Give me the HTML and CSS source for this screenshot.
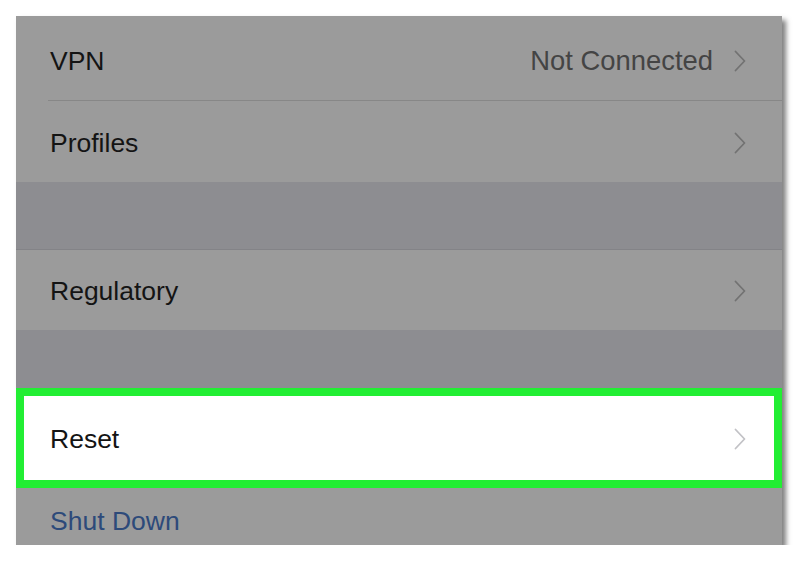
FILE: index.html
```html
<!DOCTYPE html>
<html>
<head>
<meta charset="utf-8">
<link rel="stylesheet" href="styles.css">
</head>
<body>
<div class="panel">
  <div class="row row-vpn">
    <span class="label">VPN</span>
    <span class="right"><span class="value">Not Connected</span>
      <svg class="chev" viewBox="0 0 12 22"><path d="M1.5 1.5 L10.5 11 L1.5 20.5"/></svg></span>
  </div>
  <div class="sep"></div>
  <div class="row row-profiles">
    <span class="label">Profiles</span>
    <svg class="chev" viewBox="0 0 12 22"><path d="M1.5 1.5 L10.5 11 L1.5 20.5"/></svg>
  </div>
  <div class="gap gap-1"></div>
  <div class="row row-reg">
    <span class="label">Regulatory</span>
    <svg class="chev" viewBox="0 0 12 22"><path d="M1.5 1.5 L10.5 11 L1.5 20.5"/></svg>
  </div>
  <div class="gap gap-2"></div>
  <div class="row row-reset">
    <span class="label">Reset</span>
    <svg class="chev chev-light" viewBox="0 0 12 22"><path d="M1.5 1.5 L10.5 11 L1.5 20.5"/></svg>
  </div>
  <div class="row row-shut">
    <span class="label link">Shut Down</span>
  </div>
</div>
</body>
</html>
```
FILE: styles.css
```css
html, body {
  margin: 0;
  padding: 0;
  background: #ffffff;
}
body {
  font-family: "Liberation Sans", Arial, sans-serif;
}
.panel {
  margin: 16px 0 0 16px;
  width: 766px;
  height: 529px;
  background: #9b9b9b;
  box-shadow: 4px 4px 5px rgba(0, 0, 0, 0.5);
  display: flex;
  flex-direction: column;
  overflow: hidden;
}
.row {
  display: flex;
  align-items: center;
  justify-content: space-between;
  padding: 0 36px 0 34px;
  box-sizing: border-box;
  flex: none;
}
.label {
  font-size: 26.5px;
  color: #141414;
}
.right {
  display: flex;
  align-items: center;
  gap: 21px;
}
.value {
  font-size: 27.4px;
  color: #444444;
}
.chev {
  width: 12px;
  height: 22px;
  fill: none;
  stroke: #727272;
  stroke-width: 1.8;
  stroke-linecap: round;
  stroke-linejoin: round;
}
.chev-light {
  stroke: #c2c2c6;
}
.row-vpn {
  height: 84px;
  padding-top: 6px;
}
.sep {
  height: 1px;
  margin-left: 32px;
  background: #878787;
  flex: none;
}
.row-profiles {
  height: 81px;
  padding-top: 3px;
}
.gap {
  background: #8d8d91;
  flex: none;
}
.gap-1 {
  height: 67px;
  border-bottom: 1px solid #838387;
}
.row-reg {
  height: 80px;
  padding-top: 2px;
}
.gap-2 {
  height: 58px;
}
.row-reset {
  height: 100px;
  background: #ffffff;
  border: 8px solid #22ee33;
  padding: 2px 28px 0 26px;
}
.row-shut {
  height: 57px;
  padding-top: 9px;
}
.link {
  color: #2d4a7a;
}
```
